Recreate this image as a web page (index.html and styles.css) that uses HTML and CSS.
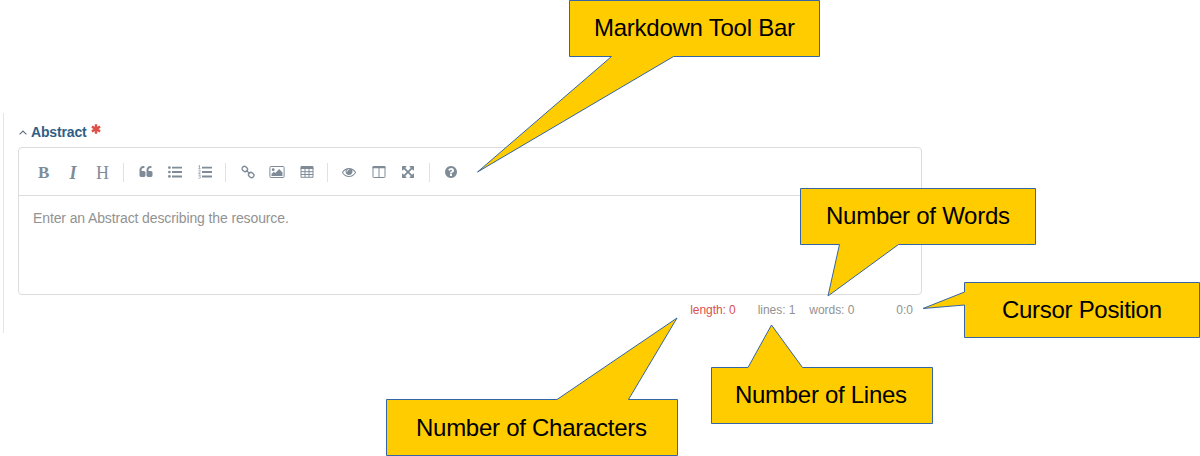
FILE: index.html
```html
<!DOCTYPE html>
<html lang="en">
<head>
<meta charset="utf-8">
<title>Abstract editor</title>
<link rel="stylesheet" href="styles.css">
</head>
<body>
<main class="panel">
  <div class="heading">
    <svg class="caret" viewBox="0 0 8 5"><path d="M.6 4.4 4 1.1l3.4 3.3"/></svg>
    <span class="title">Abstract</span>
    <svg class="required" viewBox="0 0 10 10"><path d="M5 .2v9.600M.9 2.600l8.200 4.800M9.100 2.600.9 7.400"/></svg>
  </div>
  <div class="editor">
    <div class="toolbar">
      <span class="tool letter bold">B</span>
      <span class="tool letter italic">I</span>
      <span class="tool letter">H</span>
      <i class="sep"></i>
      <span class="tool"><svg width="14" height="14" viewBox="0 0 1792 1792"><path d="M832 960v384q0 80-56 136t-136 56h-384q-80 0-136-56t-56-136v-704q0-104 40.5-198.5t109.5-163.5 163.5-109.5 198.5-40.5h64q26 0 45 19t19 45v128q0 26-19 45t-45 19h-64q-106 0-181 75t-75 181v32q0 40 28 68t68 28h224q80 0 136 56t56 136zm896 0v384q0 80-56 136t-136 56h-384q-80 0-136-56t-56-136v-704q0-104 40.5-198.5t109.5-163.5 163.5-109.5 198.5-40.5h64q26 0 45 19t19 45v128q0 26-19 45t-45 19h-64q-106 0-181 75t-75 181v32q0 40 28 68t68 28h224q80 0 136 56t56 136z"/></svg></span>
      <span class="tool"><svg width="14" height="14" viewBox="0 0 14 14"><circle cx="1.4" cy="2.6" r="1.35"/><circle cx="1.4" cy="7" r="1.35"/><circle cx="1.4" cy="11.4" r="1.35"/><path d="M4 1.7h10v1.900H4zM4 6.100h10v1.900H4zM4 10.500h10v1.900H4z"/></svg></span>
      <span class="tool"><svg width="14" height="14" viewBox="0 0 14 14"><path d="M4 1.7h10v1.900H4zM4 6.100h10v1.900H4zM4 10.500h10v1.900H4z"/><path class="line thin" d="M.5 1.1 1.5.5v3M.4 3.7h2.2M.5 5.7c.8-.8 2-.4 1.8.4C2.1 6.900.8 7.300.6 8.400h2M.5 10h1.900L1.500 11.300c1.500 0 1.300 2-.1 2L.4 13"/></svg></span>
      <i class="sep"></i>
      <span class="tool"><svg width="14" height="14" viewBox="0 0 14 14"><g class="line link"><rect x="1" y="1.700" width="5.600" height="4.600" rx="2.200" transform="rotate(45 3.800 4)"/><rect x="7.400" y="7.700" width="5.600" height="4.600" rx="2.200" transform="rotate(45 10.200 10)"/><path d="m5 5.200 4 3.600"/></g></svg></span>
      <span class="tool"><svg width="16" height="14" viewBox="0 0 16 14"><rect class="line" x=".9" y="1.500" width="14.200" height="11" rx=".9"/><circle cx="4.200" cy="4.700" r="1.400"/><path d="M2.500 11V9l2.300-2.300L6.300 8l3.900-3.900 3.300 3.300V11z"/></svg></span>
      <span class="tool"><svg width="14" height="14" viewBox="0 0 14 14"><path d="M1.500 1h11q1 0 1 1v2H.5V2q0-1 1-1z"/><path class="line" d="M1 3v9.300h12V3M1 6.700h12M1 9.500h12M5 4v8M9 4v8"/></svg></span>
      <i class="sep"></i>
      <span class="tool"><svg width="14" height="14" viewBox="0 0 1792 1792"><path d="M1664 960q-152-236-381-353 61 104 61 225 0 185-131.5 316.5t-316.5 131.5-316.5-131.5-131.5-316.5q0-121 61-225-229 117-381 353 133 205 333.5 326.5t434.5 121.5 434.5-121.5 333.5-326.5zm-720-384q0-20-14-34t-34-14q-125 0-214.5 89.5t-89.5 214.5q0 20 14 34t34 14 34-14 14-34q0-86 61-147t147-61q20 0 34-14t14-34zm848 384q0 34-20 69-140 230-376.5 368.5t-499.5 138.5-499.5-139-376.5-368q-20-35-20-69t20-69q140-229 376.5-368t499.500-139 499.500 139 376.500 368q20 35 20 69z"/></svg></span>
      <span class="tool"><svg width="14" height="14" viewBox="0 0 14 14"><path d="M1.500 1h11q1 0 1 1v1.200H.5V2q0-1 1-1z"/><path class="line" d="M1 2v9.800q0 .7.700.7h10.600q.7 0 .7-.7V2M7 3v9.500"/></svg></span>
      <span class="tool"><svg width="14" height="14" viewBox="0 0 1792 1792"><path d="M1411 541l-355 355 355 355 144-144q29-31 70-14 39 17 39 59v448q0 26-19 45t-45 19h-448q-42 0-59-40-17-39 14-69l144-144-355-355-355 355 144 144q31 30 14 69-17 40-59 40h-448q-26 0-45-19t-19-45v-448q0-42 40-59 39-17 69 14l144 144 355-355-355-355-144 144q-19 19-45 19-12 0-24-5-40-17-40-59v-448q0-26 19-45t45-19h448q42 0 59 40 17 39-14 69l-144 144 355 355 355-355-144-144q-31-30-14-69 17-40 59-40h448q26 0 45 19t19 45v448q0 42-39 59-13 5-25 5-26 0-45-19z"/></svg></span>
      <i class="sep"></i>
      <span class="tool"><svg width="14" height="14" viewBox="0 0 1792 1792"><path d="M1024 1376v-192q0-14-9-23t-23-9h-192q-14 0-23 9t-9 23v192q0 14 9 23t23 9h192q14 0 23-9t9-23zm256-672q0-88-55.500-163t-138.500-116-170-41q-243 0-371 213-15 24 8 42l132 100q7 6 19 6 16 0 25-12 53-68 86-92 34-24 86-24 48 0 85.500 26t37.500 59q0 38-20 61t-68 45q-63 28-115.500 86.500t-52.500 125.500v36q0 14 9 23t23 9h192q14 0 23-9t9-23q0-19 21.500-49.500t54.500-49.500q32-18 49-28.500t46-35 44.500-48 28-60.500 12.500-81zm384 192q0 209-103 385.500t-279.500 279.500-385.500 103-385.500-103-279.500-279.500-103-385.500 103-385.500 279.500-279.500 385.500-103 385.500 103 279.500 279.500 103 385.500z"/></svg></span>
    </div>
    <div class="content">Enter an Abstract describing the resource.</div>
  </div>
  <div class="status">
    <span class="length">length: 0</span>
    <span class="lines">lines: 1</span>
    <span class="words">words: 0</span>
    <span class="cursor">0:0</span>
  </div>
</main>
<svg class="callouts" width="1200" height="456" viewBox="0 0 1200 456">
  <g class="shapes">
    <path d="M569.500.5h250v56H673.500L477.500 172 611.500 56.500h-42z"/>
    <path d="M800.500 188.500h235v56h-137L828 296l11.500-51.500h-39z"/>
    <path d="M964.500 282.500h235v55h-235v-32.500L923 308.500l41.500-16.500z"/>
    <path d="M711.500 367.500h36.500L771.500 325l31 42.500h130v56h-221z"/>
    <path d="M386.500 399.500h170.500L677 318l-48.500 81.500h49v56h-291z"/>
  </g>
  <g class="labels">
    <text x="594" y="36" textLength="201">Markdown Tool Bar</text>
    <text x="826" y="224" textLength="184">Number of Words</text>
    <text x="1002" y="318" textLength="160">Cursor Position</text>
    <text x="735" y="403" textLength="172">Number of Lines</text>
    <text x="416" y="436" textLength="231">Number of Characters</text>
  </g>
</svg>
</body>
</html>
```
FILE: styles.css
```css
* { box-sizing: border-box; }
body {
  margin: 0;
  padding-top: 113px;
  height: 456px;
  overflow: hidden;
  background: #fff;
  font-family: "Liberation Sans", Arial, sans-serif;
}
.panel {
  width: 922px;
  height: 220px;
  margin-left: 3px;
  padding: 10px 3px 0 15px;
  border-left: 1px solid #e4e4e4;
}
.heading {
  display: flex;
  align-items: center;
  height: 18px;
  margin-bottom: 6px;
}
.caret { width: 8px; height: 5px; margin-top: 1px; fill: none; stroke: #5d6f80; stroke-width: 1.1; }
.title {
  margin-left: 4px;
  width: 57px;
  font-size: 14px;
  font-weight: bold;
  letter-spacing: -.15px;
  line-height: 18px;
  color: #2f5e86;
}
.required { width: 10px; height: 10px; margin: -7px 0 0 3px; fill: none; stroke: #dc5148; stroke-width: 2.4; }
.editor {
  height: 148px;
  width: 904px;
  margin-left: -1px;
  border: 1px solid #dcdcdc;
  border-radius: 4px;
}
.toolbar {
  display: flex;
  align-items: center;
  height: 48px;
  padding: 1px 0 0 10px;
  border-bottom: 1px solid #dcdcdc;
}
.tool {
  display: flex;
  justify-content: center;
  align-items: center;
  flex: none;
  width: 29.4px;
  height: 30px;
}
.tool svg { margin-left: 1px; fill: #7f8c98; }
.tool .line { fill: none; stroke: #7f8c98; stroke-width: 1; }
.tool .thin { stroke-width: .7; }
.tool .link { stroke-width: 1.4; }
.letter { padding-top: 1px; font: 18px/30px "Liberation Serif", serif; color: #7f8c98; }
.bold { font-size: 17px; font-weight: bold; }
.italic { font-style: italic; font-weight: bold; }
.sep { flex: none; width: 1px; height: 19px; margin: 0 6.3px; background: #dfe1e3; }
.content { padding: 13px 14px; font-size: 14px; line-height: 18px; letter-spacing: -.12px; color: #929292; }
.status {
  display: flex;
  justify-content: flex-end;
  height: 18px;
  margin-top: 6px;
  padding-right: 9px;
  font-size: 12px;
  line-height: 18px;
  color: #929292;
}
.length { color: #d9504f; letter-spacing: -.05px; }
.lines { margin-left: 22px; letter-spacing: -.05px; }
.words { margin-left: 14px; letter-spacing: -.05px; }
.cursor { margin-left: 42px; }
.callouts { position: absolute; left: 0; top: 0; }
.shapes { fill: #fc0; stroke: #3465a4; stroke-width: 1; }
.labels { font-size: 24px; fill: #000; }
```
